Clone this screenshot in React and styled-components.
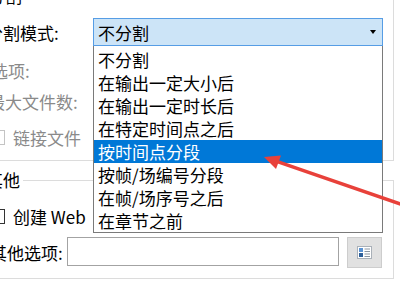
import React from 'react';
import styled, { createGlobalStyle } from 'styled-components';

const GlobalStyle = createGlobalStyle`
	html, body {
		margin: 0;
		padding: 0;
		background: #fff;
		overflow: hidden;
	}
	* {
		box-sizing: border-box;
	}
`;

const Window = styled.div`
	position: relative;
	width: 400px;
	height: 300px;
	overflow: hidden;
	background: #fff;
	font-family: "Noto Sans CJK SC", "Noto Sans", sans-serif;
	font-size: 17px;
	color: #000;
`;

// the dialog is cropped: its left edge and top sit outside the picture
const Sheet = styled.div`
	width: 418px;
	margin: -14px 0 0 -24px;
	display: flex;
	flex-direction: column;
	gap: 9px;
`;

const GroupHead = styled.div`
	display: flex;
	height: 20px;
	line-height: 20px;
`;

const HeadLine = styled.span`
	align-self: flex-end;
	height: 10px;
	border-top: 1px solid #dcdcdc;
	${(p) =>
		p.$lead
			? `width: ${p.$lead}px; border-left: 1px solid #dcdcdc;`
			: 'flex: 1; border-right: 1px solid #dcdcdc;'}
`;

const GroupTitle = styled.span`
	padding: 0 3px 0 2px;
	white-space: nowrap;
`;

const GroupBody = styled.div`
	display: flex;
	flex-direction: column;
	border: 1px solid #dcdcdc;
	border-top: none;
	padding: 12px 10px ${(p) => p.$pb}px 9px;
`;

const Row = styled.div`
	display: flex;
	align-items: center;
	height: ${(p) => p.$h}px;
	margin-top: ${(p) => p.$mt || 0}px;
`;

const Label = styled.span`
	flex: none;
	width: ${(p) => (p.$w ? `${p.$w}px` : 'auto')};
	margin-left: ${(p) => p.$indent || 0}px;
	color: ${(p) => (p.$disabled ? '#8a8a8a' : '#000')};
	white-space: nowrap;
`;

const Check = styled.span`
	flex: none;
	width: 15px;
	height: 15px;
	margin-left: ${(p) => p.$indent || 0}px;
	margin-right: 8px;
	border: 1px solid ${(p) => (p.$disabled ? '#c4c4c4' : '#333')};
	background: #fff;
`;

const Combo = styled.div`
	position: relative;
	flex: none;
	width: 290px;
	height: 28px;
	display: flex;
	align-items: center;
	padding-left: 4px;
	border: 1px solid #569de5;
	background: #cce4f7;
`;

const ComboText = styled.span`
	flex: 1;
	white-space: nowrap;
`;

const Caret = styled.span`
	width: 0;
	height: 0;
	margin-right: 6px;
	border-left: 3.5px solid transparent;
	border-right: 3.5px solid transparent;
	border-top: 4px solid #000;
`;

const DropList = styled.ul`
	position: absolute;
	top: calc(100% + 1px);
	left: -1px;
	width: 290px;
	margin: 0;
	padding: 2px 0 0;
	list-style: none;
	background: #fff;
	border: 1px solid #7a7a7a;
	border-top: none;
	z-index: 5;
`;

const Item = styled.li`
	height: 23px;
	line-height: 23px;
	padding-left: 4px;
	white-space: nowrap;
	background: ${(p) => (p.$active ? '#0078d7' : 'transparent')};
	color: ${(p) => (p.$active ? '#fff' : '#000')};
`;

const TextBox = styled.div`
	flex: none;
	width: 272px;
	height: 29px;
	border: 1px solid #a3a3a3;
	background: #fff;
	align-self: flex-start;
`;

const IconButton = styled.button`
	flex: none;
	width: 35px;
	height: 31px;
	margin-left: 8px;
	padding: 0;
	display: flex;
	align-items: center;
	justify-content: center;
	border: 1px solid #cdcdcd;
	background: #e1e1e1;
`;

const Overlay = styled.svg`
	position: absolute;
	inset: 0;
	pointer-events: none;
	z-index: 10;
`;

const options = [
	'不分割',
	'在输出一定大小后',
	'在输出一定时长后',
	'在特定时间点之后',
	'按时间点分段',
	'按帧/场编号分段',
	'在帧/场序号之后',
	'在章节之前',
];

const DetailsIcon = () => (
	<svg width="15" height="13" viewBox="0 0 15 13">
		<rect x="0.5" y="0.5" width="14" height="12" fill="#fff" stroke="#a9b0b8" />
		<rect x="2" y="2" width="4" height="4" fill="#5b93d3" />
		<rect x="2" y="7" width="4" height="4" fill="#2e5f99" />
		<line x1="7.5" y1="3" x2="13" y2="3" stroke="#8c96a2" />
		<line x1="7.5" y1="5.5" x2="13" y2="5.5" stroke="#8c96a2" />
		<line x1="7.5" y1="8" x2="13" y2="8" stroke="#8c96a2" />
		<line x1="7.5" y1="10.5" x2="13" y2="10.5" stroke="#8c96a2" />
	</svg>
);

const App = () => {
	const selected = 4;
	return (
		<Window>
			<GlobalStyle />
			<Sheet>
				<div>
					<GroupHead>
						<HeadLine $lead={10} />
						<GroupTitle>分割</GroupTitle>
						<HeadLine />
					</GroupHead>
					<GroupBody $pb={12}>
						<Row $h={28}>
							<Label $w={107}>分割模式:</Label>
							<Combo>
								<ComboText>{options[0]}</ComboText>
								<Caret />
								<DropList>
									{options.map((o, i) => (
										<Item key={o} $active={i === selected}>
											{o}
										</Item>
									))}
								</DropList>
							</Combo>
						</Row>
						<Row $h={22} $mt={13}>
							<Label $indent={5} $disabled>
								选项:
							</Label>
						</Row>
						<Row $h={22} $mt={9}>
							<Label $indent={2} $disabled>
								最大文件数:
							</Label>
						</Row>
						<Row $h={22} $mt={14}>
							<Check $indent={4} $disabled />
							<Label $disabled>链接文件</Label>
						</Row>
					</GroupBody>
				</div>
				<div>
					<GroupHead>
						<HeadLine $lead={8} />
						<GroupTitle>其他</GroupTitle>
						<HeadLine />
					</GroupHead>
					<GroupBody $pb={10}>
						<Row $h={22} $mt={3}>
							<Check $indent={4} />
							<Label>创建 Web</Label>
						</Row>
						<Row $h={31} $mt={10}>
							<Label $indent={4} $w={77}>
								其他选项:
							</Label>
							<TextBox />
							<IconButton>
								<DetailsIcon />
							</IconButton>
						</Row>
					</GroupBody>
				</div>
			</Sheet>
			<Overlay viewBox="0 0 400 300" width="400" height="300">
				<line x1="406" y1="206" x2="276" y2="161.2" stroke="#e8413a" strokeWidth="3.5" strokeLinecap="round" />
				<polygon points="264,157 281,155.5 276,169" fill="#e8413a" />
			</Overlay>
		</Window>
	);
};

export default App;
